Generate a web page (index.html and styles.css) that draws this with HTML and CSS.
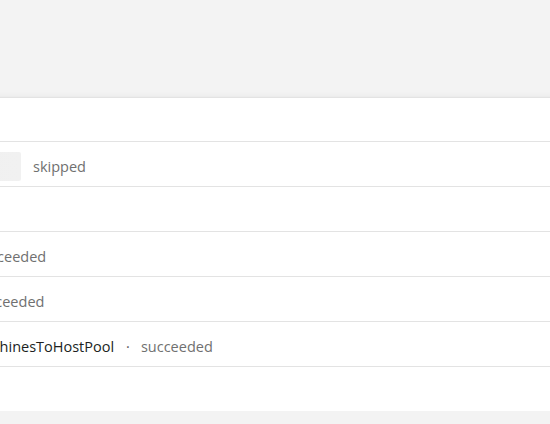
FILE: index.html
```html
<!DOCTYPE html>
<html lang="en">
<head>
<meta charset="utf-8">
<title>Deployment steps</title>
<link rel="stylesheet" href="styles.css">
</head>
<body>
<div class="page">
  <div class="card">
    <div class="row row-first"></div>
    <div class="row">
      <span class="skeleton"></span>
      <span class="status">skipped</span>
    </div>
    <div class="row"></div>
    <div class="row row-child">
      <span class="name">CreateHostPoolResource</span>
      <span class="sep">·</span>
      <span class="status">succeeded</span>
    </div>
    <div class="row row-child">
      <span class="name">CreateWorkspaceRecord</span>
      <span class="sep">·</span>
      <span class="status">succeeded</span>
    </div>
    <div class="row row-child">
      <span class="name">AddAzureSessionHostVirtualMachinesToHostPool</span>
      <span class="sep">·</span>
      <span class="status">succeeded</span>
    </div>
    <div class="row row-last"></div>
  </div>
</div>
</body>
</html>
```
FILE: styles.css
```css
html, body {
  margin: 0;
  padding: 0;
}
body {
  background: #f3f3f3;
  overflow: hidden;
  font-family: "Open Sans", "Noto Sans", sans-serif;
  font-size: 14.5px;
  color: #323130;
}
.page {
  padding-top: 97px;
}
.card {
  margin-left: -300px;
  width: 1200px;
  background: #ffffff;
  border-top: 1px solid #e3e3e3;
  box-shadow: 0 3px 9px rgba(0, 0, 0, 0.1), 0 1px 2px rgba(0, 0, 0, 0.06);
}
.row {
  display: flex;
  align-items: center;
  box-sizing: border-box;
  height: 45px;
  padding-left: 60px;
  padding-top: 4px;
  border-bottom: 1px solid #e3e3e3;
  white-space: nowrap;
}
.row-first {
  height: 44px;
}
.row-last {
  height: 44px;
  border-bottom: none;
}
.row-child {
  padding-left: 79px;
}
.skeleton {
  width: 261px;
  height: 29px;
  border-radius: 2px;
  background: linear-gradient(90deg, #ededed, #f1f1f1);
  margin-right: 12px;
}
.name {
  color: #201f1e;
}
.sep {
  color: #605e5c;
  margin: 0 11px 0 12px;
}
.status {
  color: #707070;
}
```
